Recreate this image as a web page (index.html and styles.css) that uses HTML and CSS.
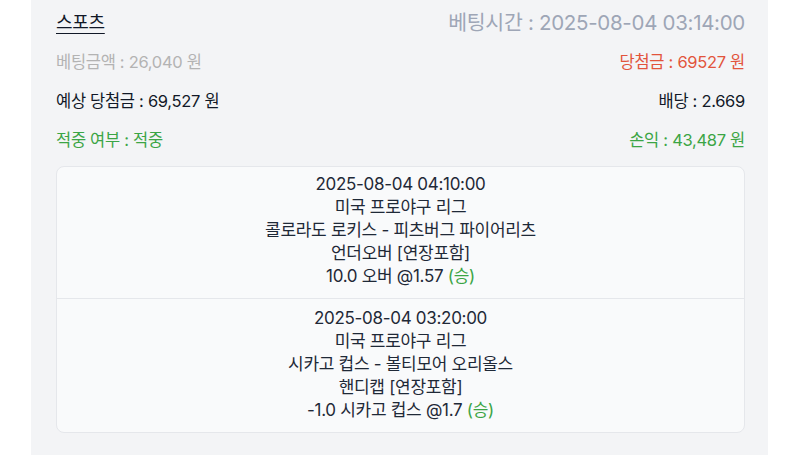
FILE: index.html
```html
<!DOCTYPE html>
<html lang="ko">
<head>
<meta charset="utf-8">
<link rel="stylesheet" href="styles.css">
</head>
<body>
<div class="panel">
  <div class="row head">
    <span class="sport">스포츠</span>
    <span class="time">베팅시간 : 2025-08-04 03:14:00</span>
  </div>
  <div class="row">
    <span class="muted">베팅금액 : 26,040 원</span>
    <span class="red">당첨금 : 69527 원</span>
  </div>
  <div class="row">
    <span class="dark">예상 당첨금 : 69,527 원</span>
    <span class="dark">배당 : 2.669</span>
  </div>
  <div class="row">
    <span class="green">적중 여부 : 적중</span>
    <span class="green">손익 : 43,487 원</span>
  </div>
  <div class="card">
    <div class="game">
      <div>2025-08-04 04:10:00</div>
      <div>미국 프로야구 리그</div>
      <div>콜로라도 로키스 - 피츠버그 파이어리츠</div>
      <div>언더오버 [연장포함]</div>
      <div>10.0 오버 @1.57 <span class="win">(승)</span></div>
    </div>
    <div class="game">
      <div>2025-08-04 03:20:00</div>
      <div>미국 프로야구 리그</div>
      <div>시카고 컵스 - 볼티모어 오리올스</div>
      <div>핸디캡 [연장포함]</div>
      <div>-1.0 시카고 컵스 @1.7 <span class="win">(승)</span></div>
    </div>
  </div>
</div>
</body>
</html>
```
FILE: styles.css
```css
html, body {
  margin: 0;
  padding: 0;
  background: #ffffff;
}
body {
  font-family: Inter, "Noto Sans CJK KR", sans-serif;
  color: #1f2937;
  letter-spacing: -0.3px;
}
.panel {
  margin-left: 31px;
  width: 737px;
  height: 455px;
  box-sizing: border-box;
  background: #f3f4f6;
  padding: 0 23px 0 25px;
}
.row {
  display: flex;
  justify-content: space-between;
  align-items: center;
  height: 39px;
  font-size: 16.5px;
}
.row.head {
  height: 41px;
}
.sport {
  font-size: 18px;
  color: #111827;
  text-decoration: underline;
  text-underline-offset: 4px;
  text-decoration-thickness: 1px;
}
.time {
  font-size: 20.5px;
  color: #9ea6b6;
}
.muted { color: #b3b3b3; }
.red { color: #e2543c; }
.dark { color: #111827; }
.green { color: #3ba545; }
.card {
  margin-top: 8px;
  background: #f9fafb;
  border: 1px solid #e5e7eb;
  border-radius: 8px;
  text-align: center;
  font-size: 17px;
  line-height: 23px;
  color: #1f2937;
}
.game {
  padding: 6px 0 10px;
}
.game + .game {
  border-top: 1px solid #e5e7eb;
  padding: 8px 0 10px;
}
.win { color: #3ba545; }
```
